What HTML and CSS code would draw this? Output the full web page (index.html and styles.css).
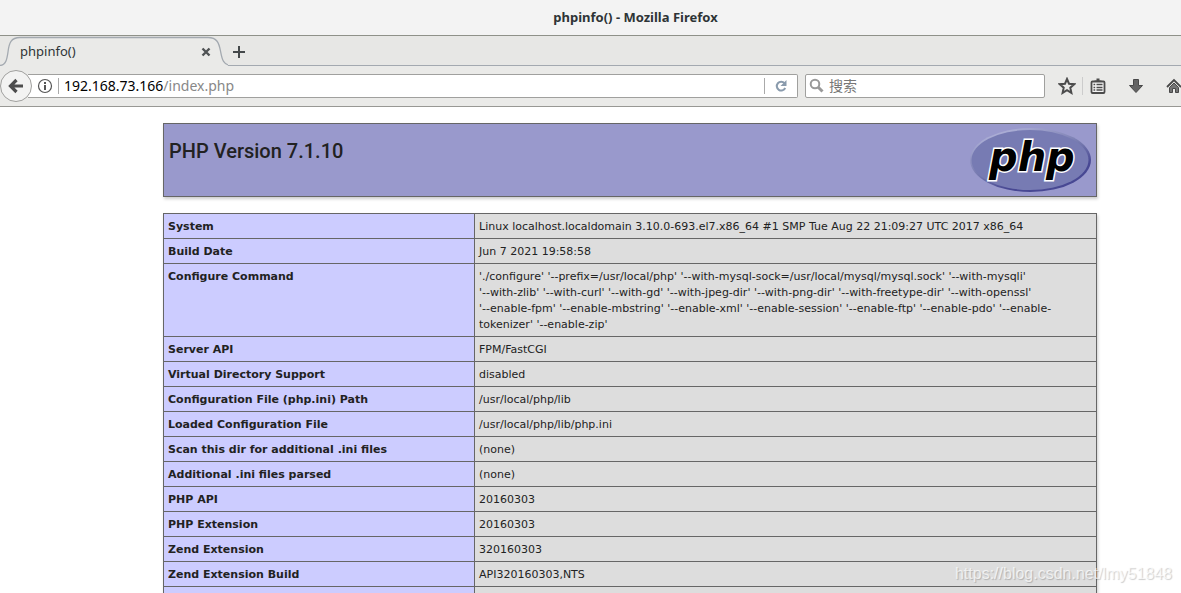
FILE: index.html
```html
<!DOCTYPE html>
<html lang="en">
<head>
<meta charset="utf-8">
<title>phpinfo()</title>
<link rel="stylesheet" href="styles.css">
</head>
<body>
<header class="chrome">
  <div class="titlebar">phpinfo() - Mozilla Firefox</div>
  <div class="tabstrip">
    <div class="tab">
      <svg class="tab-shape" width="236" height="31" viewBox="0 0 236 31" aria-hidden="true"><path d="M0 29.500C6 29 7 23 8 16C9 7 11 1.500 20 1.500H208C217 1.500 219 7 220.500 15C222 23 223 29.500 232 29.500H236V31H0Z" fill="#eaeae8"/><path d="M0 29.500C6 29 7 23 8 16C9 7 11 1.500 20 1.500H208C217 1.500 219 7 220.500 15C222 23 223 29.500 232 29.500H236" fill="none" stroke="#a3a9b0" stroke-width="1.300"/></svg>
      <span class="tab-label">phpinfo()</span>
      <button class="tab-close" aria-label="Close tab"><svg width="10" height="10" viewBox="0 0 10 10"><path d="M1.500 1.500L8.500 8.500M8.500 1.500L1.500 8.500" stroke="#505354" stroke-width="2.400"/></svg></button>
    </div>
    <button class="tab-new" aria-label="New tab"><svg width="14" height="14" viewBox="0 0 14 14"><path d="M7 1V13M1 7H13" stroke="#44484a" stroke-width="2"/></svg></button>
  </div>
  <nav class="toolbar">
    <button class="back" aria-label="Back"><svg width="16" height="16" viewBox="0 0 16 16"><path d="M8.500 2L2.500 8L8.500 14M3 8H15" fill="none" stroke="#4d4d4d" stroke-width="3.200"/></svg></button>
    <div class="urlbar">
      <svg class="info" width="16" height="16" viewBox="0 0 16 16" aria-hidden="true"><circle cx="8" cy="8" r="6.500" fill="none" stroke="#555" stroke-width="1.200"/><path d="M8 7V12M8 4V6" stroke="#444" stroke-width="1.800"/></svg>
      <span class="url"><span class="host">192.168.73.166</span>/index.php</span>
      <button class="reload" aria-label="Reload"><svg width="14" height="14" viewBox="0 0 14 14"><path d="M10.500 4.200A4.400 4.400 0 1 0 11.200 9" fill="none" stroke="#8a9bad" stroke-width="2"/><path d="M12.500 1V7H6.500Z" fill="#8a9bad"/></svg></button>
    </div>
    <div class="searchbar">
      <svg width="16" height="16" viewBox="0 0 16 16" aria-hidden="true"><circle cx="6" cy="6" r="4.300" fill="none" stroke="#999" stroke-width="2"/><path d="M9 9L13.500 13.500" stroke="#999" stroke-width="3"/></svg>
      <input type="search" placeholder="搜索" aria-label="搜索">
    </div>
    <div class="tools">
      <button class="tool star" aria-label="Bookmark"><svg width="18" height="18" viewBox="0 0 18 18"><path d="M9 2L11 6.700L16.200 7.200L12.300 10.700L13.400 15.800L9 13.100L4.600 15.800L5.700 10.700L1.800 7.200L7 6.700Z" fill="none" stroke="#4c4c4c" stroke-width="2"/></svg></button>
      <button class="tool list" aria-label="Bookmarks list"><svg width="16" height="16" viewBox="0 0 16 16"><rect x="1.500" y="3.500" width="13" height="11.500" rx="1" fill="#f4f4f4" stroke="#4c4c4c" stroke-width="1.800"/><path d="M4.500 4V2.500H6.500V0.500H9.500V2.500H11.500V4Z" fill="#4c4c4c"/><path d="M3.500 6.500H5.200M6.500 6.500H12.500M3.500 9.500H5.200M6.500 9.500H12.500M3.500 12H5.200M6.500 12H12.500" stroke="#4c4c4c" stroke-width="1.300"/></svg></button>
      <button class="tool download" aria-label="Downloads"><svg width="16" height="16" viewBox="0 0 16 16"><path d="M5.500 1.500H10.500V7.500H14.500L8 14.500L1.500 7.500H5.500Z" fill="#646464" stroke="#484848"/></svg></button>
      <button class="tool home" aria-label="Home"><svg width="16" height="16" viewBox="0 0 16 16"><path d="M1 9L8 2L15 9" fill="none" stroke="#484848" stroke-width="1.800"/><path d="M3.500 9.500L8 5L12.500 9.500V14.500H9.500V10.500H6.500V14.500H3.500Z" fill="#747474" stroke="#484848"/></svg></button>
    </div>
  </nav>
</header>
<main class="page">
  <section class="banner">
    <h1>PHP Version 7.1.10</h1>
    <svg class="logo" width="121" height="64" viewBox="0 0 121 64" role="img" aria-label="php">
      <defs><linearGradient id="rim" x1="0.200" y1="0" x2="0.800" y2="1"><stop offset="0" stop-color="#b5b7dc"/><stop offset="0.500" stop-color="#7377ad"/><stop offset="0.750" stop-color="#484893"/><stop offset="1" stop-color="#484893"/></linearGradient></defs>
      <ellipse cx="60.500" cy="32" rx="60.500" ry="32" fill="url(#rim)"/>
      <ellipse cx="60" cy="32" rx="58.500" ry="30" fill="#777bb3"/>
      <text class="logo-text" x="19" y="43">php</text>
    </svg>
  </section>
  <table class="info-table">
    <tbody>
      <tr><th scope="row">System</th><td>Linux localhost.localdomain 3.10.0-693.el7.x86_64 #1 SMP Tue Aug 22 21:09:27 UTC 2017 x86_64</td></tr>
      <tr><th scope="row">Build Date</th><td>Jun 7 2021 19:58:58</td></tr>
      <tr><th scope="row">Configure Command</th><td>'./configure' '--prefix=/usr/local/php' '--with-mysql-sock=/usr/local/mysql/mysql.sock' '--with-mysqli'<br>'--with-zlib' '--with-curl' '--with-gd' '--with-jpeg-dir' '--with-png-dir' '--with-freetype-dir' '--with-openssl'<br>'--enable-fpm' '--enable-mbstring' '--enable-xml' '--enable-session' '--enable-ftp' '--enable-pdo' '--enable-<br>tokenizer' '--enable-zip'</td></tr>
      <tr><th scope="row">Server API</th><td>FPM/FastCGI</td></tr>
      <tr><th scope="row">Virtual Directory Support</th><td>disabled</td></tr>
      <tr><th scope="row">Configuration File (php.ini) Path</th><td>/usr/local/php/lib</td></tr>
      <tr><th scope="row">Loaded Configuration File</th><td>/usr/local/php/lib/php.ini</td></tr>
      <tr><th scope="row">Scan this dir for additional .ini files</th><td>(none)</td></tr>
      <tr><th scope="row">Additional .ini files parsed</th><td>(none)</td></tr>
      <tr><th scope="row">PHP API</th><td>20160303</td></tr>
      <tr><th scope="row">PHP Extension</th><td>20160303</td></tr>
      <tr><th scope="row">Zend Extension</th><td>320160303</td></tr>
      <tr><th scope="row">Zend Extension Build</th><td>API320160303,NTS</td></tr>
      <tr><th scope="row"></th><td></td></tr>
    </tbody>
  </table>
</main>
<div class="watermark">https://blog.csdn.net/lmy51848</div>
</body>
</html>
```
FILE: styles.css
```css
* { box-sizing: border-box; }
html, body { height: 100%; }
body {
  margin: 0;
  display: flex;
  flex-direction: column;
  overflow: hidden;
  background: #fff;
  color: #222;
  font-family: "DejaVu Sans", sans-serif;
}
button {
  display: flex;
  align-items: center;
  justify-content: center;
  padding: 0;
  border: 0;
  background: none;
}
svg { display: block; flex: none; }

.chrome { flex: none; font-family: "Noto Sans", "Noto Sans CJK SC", sans-serif; font-size: 13px; }
.titlebar {
  height: 36px;
  padding-left: 90px;
  border-bottom: 1px solid #8f9189;
  background: #f3f3f3;
  color: #2e3436;
  font-weight: 700;
  line-height: 35px;
  text-align: center;
}
.tabstrip {
  display: flex;
  height: 30px;
  background: #e7e7e5;
  box-shadow: inset 0 -1px #a3a9b0;
}
.tab {
  display: grid;
  grid-template-columns: 180px 12px 36px;
  grid-template-rows: 30px;
  align-items: center;
  width: 228px;
  overflow: hidden;
  color: #2e3436;
}
.tab-shape { grid-area: 1 / 1 / 2 / 4; align-self: start; }
.tab-label { grid-area: 1 / 1; z-index: 1; padding-left: 20px; }
.tab-close { grid-area: 1 / 3; z-index: 1; justify-self: start; margin-left: 9px; padding-top: 2px; }
.tab-new { width: 22px; padding-top: 2px; }
.toolbar {
  display: flex;
  align-items: center;
  height: 41px;
  border-bottom: 1px solid #989894;
  background: #eaeae8;
}
.back {
  flex: none;
  z-index: 1;
  width: 32px;
  height: 32px;
  border: 1px solid #a0a09e;
  border-radius: 50%;
  background: #f3f3f2;
}
.urlbar {
  display: flex;
  flex: 1;
  align-items: center;
  height: 24px;
  margin-left: -4px;
  padding-left: 9px;
  border: 1px solid #a0a09e;
  border-left: 0;
  border-radius: 0 2px 2px 0;
  background: #fff;
}
.url { flex: 1; margin-left: 5px; padding-left: 5px; border-left: 1px solid #aaa; color: #888; font-size: 14px; line-height: 16px; }
.host { color: #000; }
.reload { width: 33px; height: 16px; border-left: 1px solid #aaa; }
.searchbar {
  display: flex;
  align-items: center;
  width: 240px;
  height: 24px;
  margin-left: 7px;
  padding-left: 3px;
  border: 1px solid #a0a09e;
  border-radius: 2px;
  background: #fff;
}
.searchbar input {
  flex: 1;
  min-width: 0;
  padding: 0 4px;
  border: 0;
  outline: 0;
  background: none;
  font-family: "Noto Sans", "Noto Sans CJK SC", sans-serif;
  font-size: 14px;
  line-height: 20px;
}
.searchbar input::placeholder { color: #777; }
.tools { display: flex; flex: none; width: 136px; overflow: hidden; padding-left: 11px; }
.tool { flex: none; height: 18px; }
.star { width: 27px; justify-content: flex-start; padding-left: 2px; border-right: 1px solid #ccc; }
.list { width: 30px; }
.download { width: 46px; }
.home { width: 30px; }

.page { flex: 1; min-height: 0; overflow: hidden; padding: 16px 84px 0 163px; }
.banner {
  display: flex;
  justify-content: space-between;
  height: 74px;
  padding: 4px 5px;
  border: 1px solid #666;
  background: #99c;
  box-shadow: 1px 2px 3px #ccc;
}
.banner h1 { margin: 10px 0 0; font-family: Roboto, sans-serif; font-size: 20px; font-weight: 500; line-height: 26px; }
.logo-text {
  font-family: "DejaVu Sans", sans-serif;
  font-size: 40px;
  font-style: italic;
  font-weight: 700;
  fill: #000;
  stroke: #fff;
  stroke-width: 3px;
  paint-order: stroke;
}
.info-table {
  width: 100%;
  margin-top: 16px;
  border-collapse: collapse;
  box-shadow: 1px 2px 3px #ccc;
  font-size: 11px;
  line-height: 16px;
}
.info-table th, .info-table td { height: 25px; padding: 5px 4px 3px; border: 1px solid #666; text-align: left; vertical-align: top; }
.info-table th { width: 311px; background: #ccf; font-weight: 700; }
.info-table td { background: #ddd; }
.watermark {
  position: absolute;
  right: 9px;
  bottom: 9px;
  color: rgba(255, 255, 255, 0.7);
  font-family: "Liberation Sans", sans-serif;
  font-size: 16px;
  line-height: 20px;
  text-shadow: 1px 1px 1px rgba(0, 0, 0, 0.2);
}
```
